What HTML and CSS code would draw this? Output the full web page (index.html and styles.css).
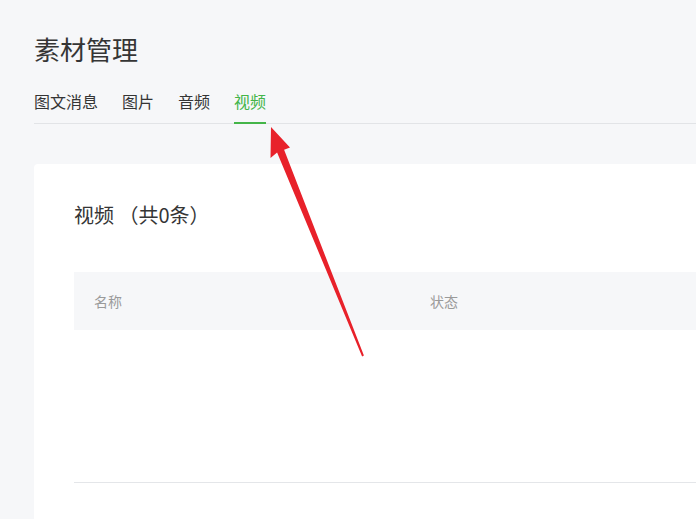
FILE: index.html
```html
<!DOCTYPE html>
<html lang="zh-CN">
<head>
<meta charset="utf-8">
<title>素材管理</title>
<link rel="stylesheet" href="styles.css">
</head>
<body>
<div class="page">
  <h1 class="page-title">素材管理</h1>
  <nav class="tabs">
    <a class="tab">图文消息</a>
    <a class="tab">图片</a>
    <a class="tab">音频</a>
    <a class="tab active">视频</a>
  </nav>
  <section class="card">
    <h2 class="card-title">视频 （共0条）</h2>
    <div class="table">
      <div class="thead">
        <div class="col col-name">名称</div>
        <div class="col col-status">状态</div>
      </div>
      <div class="tbody"></div>
    </div>
  </section>
</div>
<svg class="annot-arrow" width="696" height="519" viewBox="0 0 696 519" xmlns="http://www.w3.org/2000/svg">
  <polygon fill="#e8212a" points="271,127 290,147.5 284.1,149.8 363.9,355.6 362.1,356.4 277.1,152.6 270.5,158"/>
</svg>
</body>
</html>
```
FILE: styles.css
```css
html, body {
  margin: 0;
  padding: 0;
  height: 100%;
  overflow: hidden;
  background: #f6f7f9;
}
body {
  font-family: "Noto Sans CJK SC", "Noto Sans", "Liberation Sans", sans-serif;
  color: #353535;
  position: relative;
}
.page {
  height: 100%;
  box-sizing: border-box;
  padding: 31px 0 0 34px;
  display: flex;
  flex-direction: column;
}
.page-title {
  margin: 0;
  font-size: 26px;
  line-height: 36px;
  font-weight: normal;
  color: #353535;
}
.tabs {
  margin-top: 22px;
  display: flex;
  gap: 24px;
  border-bottom: 1px solid #e2e4e7;
}
.tab {
  font-size: 16px;
  line-height: 24px;
  padding-bottom: 9px;
  color: #353535;
  margin-bottom: -1px;
  border-bottom: 2px solid transparent;
}
.tab.active {
  color: #44b549;
  border-bottom-color: #44b549;
}
.card {
  flex: 1;
  margin-top: 40px;
  background: #fff;
  border-radius: 4px 0 0 0;
  padding: 37px 0 0 40px;
  overflow: hidden;
}
.card-title {
  margin: 0;
  font-size: 20px;
  line-height: 28px;
  font-weight: normal;
  color: #353535;
}
.table {
  margin-top: 43px;
}
.thead {
  display: flex;
  align-items: center;
  height: 58px;
  background: #f6f7f9;
  font-size: 14px;
  color: #9a9a9a;
}
.col-name {
  width: 336px;
  padding-left: 20px;
}
.tbody {
  height: 152px;
  border-bottom: 1px solid #e4e6e9;
}
.annot-arrow {
  position: absolute;
  left: 0;
  top: 0;
  pointer-events: none;
}
```
